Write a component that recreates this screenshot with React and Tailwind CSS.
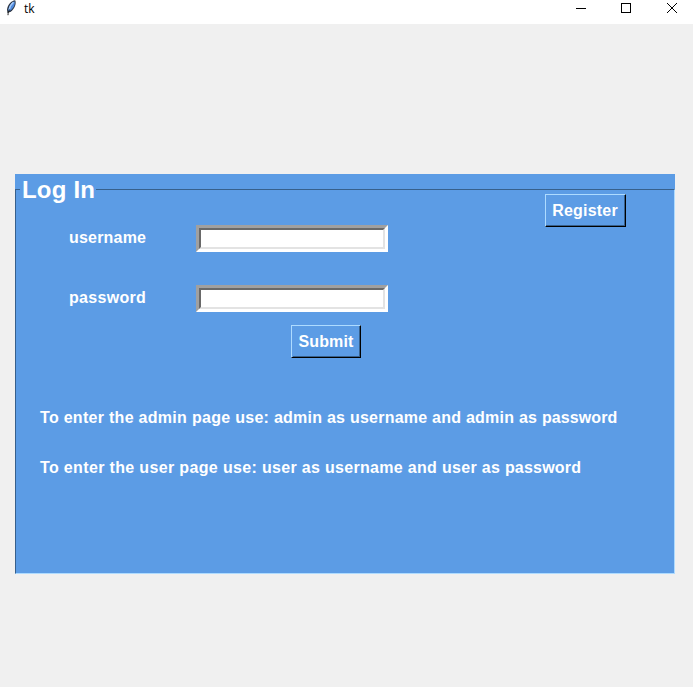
function Feather() {
  return (
    <svg width="16" height="16" viewBox="0 0 16 16" className="ml-[3px] shrink-0">
      <path d="M12.2 .3C8.4 .6 4.6 5 4 9.4L4.4 13L7.8 11.8C11.8 8.6 13.6 3.4 12.2.3Z" fill="#2b3442" />
      <path d="M11.5 1.2C8.8 2 5.6 5.8 5.1 11L7.4 10.5C10.8 7.8 12.5 4 11.5 1.2Z" fill="#4f8ade" />
      <path d="M10.5 2.2C8.2 4.2 6.5 6.8 6.2 9.6" fill="none" stroke="#a6cbfa" strokeWidth="1.4" />
      <path d="M6.6 9.5C5.7 11 5 13 5 15.2" fill="none" stroke="#202020" strokeWidth="1" />
    </svg>
  );
}

function TitleBar() {
  return (
    <header className="flex h-6 items-start bg-white">
      <Feather />
      <span className="ml-[5px] mt-[1px] flex-1 font-['Open_Sans','Noto_Sans',sans-serif] text-[12px] leading-4 text-black">tk</span>
      <svg width="103" height="16" viewBox="0 0 103 16" className="mr-[15px]" shapeRendering="crispEdges">
        <rect x="1" y="8" width="10" height="1" fill="#000" />
        <rect x="46.5" y="3.5" width="9" height="9" fill="none" stroke="#000" />
        <path d="M92 3L102 13M102 3L92 13" stroke="#000" strokeWidth="1" shapeRendering="auto" />
      </svg>
    </header>
  );
}

function Entry({ type }) {
  return (
    <div className="h-[27px] w-[192px] border-[3px] border-t-[#a0a0a0] border-r-white border-b-white border-l-[#a0a0a0]">
      <input
        type={type}
        className="block h-[21px] w-full border-2 border-t-[#696969] border-r-[#e3e3e3] border-b-[#e3e3e3] border-l-[#696969] bg-white px-1 text-black outline-none"
      />
    </div>
  );
}

function RaisedButton({ children, className }) {
  return (
    <button className={`block h-[33px] border border-t-[#aedbff] border-r-black border-b-black border-l-[#aedbff] ${className}`}>
      <span className="flex h-full items-center justify-center border-r border-b border-[#37608c] pt-[2px]">{children}</span>
    </button>
  );
}

function Field({ label, type, labelClass }) {
  return (
    <label className="flex h-[27px] pl-[53px]">
      <span className={`w-[127px] pt-[3px] leading-5 ${labelClass}`}>{label}</span>
      <Entry type={type} />
    </label>
  );
}

export default function App() {
  return (
    <div className="h-[687px] w-[693px] overflow-hidden bg-[#f0f0f0]">
      <TitleBar />
      <main className="ml-[15px] mt-[150px] h-[400px] w-[660px] bg-[#5c9ce5] font-['Liberation_Sans',Arial,sans-serif] text-[16px] font-bold text-white">
        <fieldset className="h-[400px] border border-t-[#37608c] border-r-[#aedbff] border-b-[#aedbff] border-l-[#37608c]">
          <legend className="ml-1 h-[31px] w-[76px] whitespace-nowrap pl-[2px] text-[24px] leading-[31px] tracking-[0.2px]">Log In</legend>
          <div className="-mt-[11px] flex justify-end pr-[48px]">
            <RaisedButton className="w-[81px] tracking-[0.2px]">Register</RaisedButton>
          </div>
          <div className="-mt-[2px] flex flex-col gap-[33px]">
            <Field label="username" type="text" labelClass="tracking-[0.2px]" />
            <Field label="password" type="password" labelClass="tracking-[0.3px]" />
          </div>
          <RaisedButton className="ml-[275px] mt-[13px] w-[70px] pl-[1px] tracking-[0.1px]">Submit</RaisedButton>
          <div className="mt-[50px] flex flex-col gap-[30px] whitespace-nowrap pl-6 leading-5">
            <p className="tracking-[0.24px]"><span className="tracking-[0.29px]">To enter the admin page use: </span>admin as username and admin as <span className="tracking-[0.1px]">password</span></p>
            <p className="tracking-[0.31px]"><span className="tracking-[0.35px]">To enter the user page use: </span>user as username and user as <span className="tracking-[0.2px]">password</span></p>
          </div>
        </fieldset>
      </main>
    </div>
  );
}
